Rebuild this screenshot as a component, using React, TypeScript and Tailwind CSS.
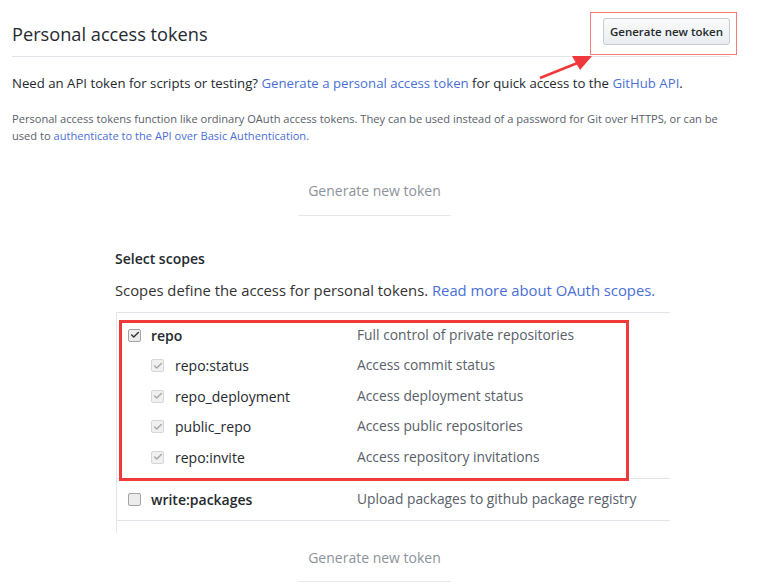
import { Check } from 'lucide-react';

const scopes = [
  { name: 'repo:status', desc: 'Access commit status' },
  { name: 'repo_deployment', desc: 'Access deployment status' },
  { name: 'public_repo', desc: 'Access public repositories' },
  { name: 'repo:invite', desc: 'Access repository invitations' },
];

const Box = ({ checked, faded }: { checked?: boolean; faded?: boolean }) => (
  <span
    className={
      'flex h-[13px] w-[13px] items-center justify-center rounded-[2px] border ' +
      (faded ? 'border-[#d6d6d6] bg-[#f0f0f0]' : 'border-[#a3a3a3] bg-[#ececec]')
    }
  >
    {checked && <Check className={faded ? 'h-[10px] w-[10px] text-[#a8a8a8]' : 'h-[10px] w-[10px] text-[#333]'} strokeWidth={3.5} />}
  </span>
);

const GhostButton = ({ className }: { className: string }) => (
  <div className={'ml-[298px] w-[153px] border-b border-[#e5e7ea] text-center ' + className}>
    <span className="text-[14px] text-[#8c9399]">Generate new token</span>
  </div>
);

const App = () => {
  return (
    <div className="relative min-h-[587px] w-[781px] overflow-hidden bg-white font-['Open_Sans',sans-serif] text-[#24292e]">
      {/* header */}
      <div className="ml-[12px] w-[718px]">
        <div className="flex h-[57px] items-center justify-between border-b border-[#e1e4e8] pt-[12px]">
          <h2 className="text-[18.2px] font-normal leading-none">Personal access tokens</h2>
          <button className="-mt-[5px] h-[27px] w-[127px] rounded-[3px] border border-[#c7ccd1] bg-gradient-to-b from-[#fafbfc] to-[#e9edf1] text-[11.5px] font-semibold text-[#24292e]">
            Generate new token
          </button>
        </div>
        <p className="mt-[16px] text-[13.2px] leading-[20px]">
          Need an API token for scripts or testing? <a className="text-[#4a6fd6]">Generate a personal access token</a> for quick
          access to the <a className="text-[#4a6fd6]">GitHub API</a>.
        </p>
        <p className="mt-[17px] w-[712px] text-[11.1px] leading-[17px] text-[#586069]">
          <span className="block">
            Personal access tokens function like ordinary OAuth access tokens. They can be used instead of a password for Git over HTTPS, or can be
          </span>
          <span className="block">
            used to <a className="text-[#4a6fd6]">authenticate to the API over Basic Authentication</a>.
          </span>
        </p>
      </div>

      <GhostButton className="mt-[34px] pb-[13px]" />

      {/* scopes */}
      <div className="ml-[115px] mt-[33px] w-[555px]">
        <h3 className="text-[14px] font-semibold leading-[20px]">Select scopes</h3>
        <p className="mt-[11px] text-[14.8px] leading-[20px] text-[#333]">
          Scopes define the access for personal tokens. <a className="text-[#4a6fd6]">Read more about OAuth scopes.</a>
        </p>
        <div className="mt-[12px] ml-px border-l border-t border-[#e1e4e8]">
          <div className="border-b border-[#e1e4e8] pt-[7px] pb-[5px]">
            <div className="flex h-[30.5px] items-center">
              <div className="flex w-[240px] items-center pl-[11px]">
                <Box checked />
                <span className="ml-[10px] text-[14px] font-semibold">repo</span>
              </div>
              <span className="text-[13.8px] text-[#586069]">Full control of private repositories</span>
            </div>
            {scopes.map((s) => (
              <div key={s.name} className="flex h-[30.5px] items-center">
                <div className="flex w-[240px] items-center pl-[34px]">
                  <Box checked faded />
                  <span className="ml-[11px] text-[14px]">{s.name}</span>
                </div>
                <span className="text-[13.8px] text-[#586069]">{s.desc}</span>
              </div>
            ))}
          </div>
          <div className="border-b border-[#e1e4e8] pt-[6px] pb-[5px]">
            <div className="flex h-[30px] items-center">
              <div className="flex w-[240px] items-center pl-[11px]">
                <Box />
                <span className="ml-[10px] text-[14px] font-semibold">write:packages</span>
              </div>
              <span className="text-[13.8px] text-[#586069]">Upload packages to github package registry</span>
            </div>
          </div>
          <div className="h-[12px]" />
        </div>
      </div>

      <GhostButton className="mt-[12px] pb-[12px]" />

      {/* annotations */}
      <div className="pointer-events-none absolute left-[590px] top-[12px] h-[43px] w-[147px] border border-[#f57a7a]" />
      <div className="pointer-events-none absolute left-[119px] top-[320px] h-[161px] w-[510px] border-[3px] border-[#f03a3a]" />
      <svg className="pointer-events-none absolute left-[530px] top-[50px]" width="70" height="35" viewBox="0 0 70 35">
        <line x1="10" y1="28" x2="50" y2="12" stroke="#f0383a" strokeWidth="2.5" />
        <polygon points="62,6 42,6 50,20" fill="#f0383a" />
      </svg>
    </div>
  );
};

export default App;
